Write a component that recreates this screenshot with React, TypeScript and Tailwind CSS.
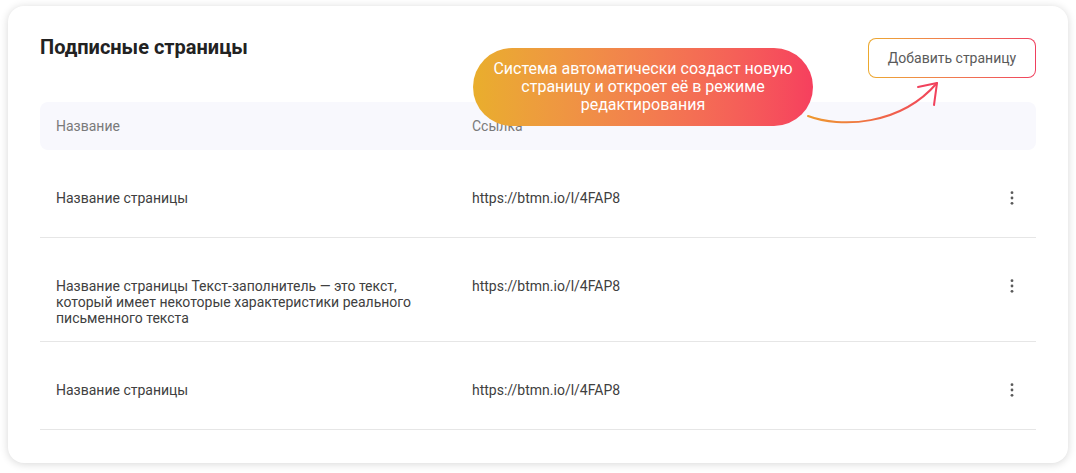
const rows = [
  { name: "Название страницы", link: "https://btmn.io/l/4FAP8", h: "h-[88px]" },
  {
    name: "Название страницы Текст-заполнитель — это текст, который имеет некоторые характеристики реального письменного текста",
    link: "https://btmn.io/l/4FAP8",
    h: "h-[104px]",
  },
  { name: "Название страницы", link: "https://btmn.io/l/4FAP8", h: "h-[88px]" },
];

const Kebab = () => (
  <svg width="24" height="24" viewBox="0 0 24 24" className="-mt-1">
    <circle cx="12" cy="6.7" r="1.4" fill="#5a5a5a" />
    <circle cx="12" cy="12" r="1.4" fill="#5a5a5a" />
    <circle cx="12" cy="17.3" r="1.4" fill="#5a5a5a" />
  </svg>
);

const Arrow = () => (
  <svg width="150" height="60" viewBox="0 0 150 60" className="absolute left-[792px] top-[64px]">
    <defs>
      <linearGradient id="arr" x1="0" y1="0" x2="1" y2="0">
        <stop offset="0" stopColor="#ee9a2e" />
        <stop offset="1" stopColor="#f1425c" />
      </linearGradient>
    </defs>
    <path d="M8 46 C 40 58, 100 56, 137 13" fill="none" stroke="url(#arr)" strokeWidth="2" strokeLinecap="round" />
    <path d="M118 17 L137 13 L134 35" fill="none" stroke="#f1425c" strokeWidth="2" strokeLinecap="round" strokeLinejoin="round" />
  </svg>
);

export default function App() {
  return (
    <div className="w-[1076px] h-[473px] bg-white pt-[6px] pl-[8px] font-['Roboto',sans-serif]">
      <div className="relative w-[1060px] h-[457px] rounded-[16px] bg-white shadow-[0_1px_8px_rgba(0,0,0,0.16)] px-8 pt-[27px]">
        <div className="flex justify-between items-start h-[69px]">
          <h1 className="text-[20px] leading-[28px] font-bold text-[#222]">Подписные страницы</h1>
          <div className="mt-[5px] rounded-[8px] p-px bg-gradient-to-r from-[#eca92e] to-[#ef3f5e]">
            <button className="h-[38px] w-[166px] rounded-[7px] bg-white text-[14px] text-[#5a5a5a]">
              Добавить страницу
            </button>
          </div>
        </div>

        <div className="flex items-center h-12 rounded-[8px] bg-[#f8f8fd] text-[14px] text-[#7a7a7a]">
          <div className="w-[416px] px-4">Название</div>
          <div className="px-4">Ссылка</div>
        </div>

        {rows.map((r, i) => (
          <div key={i} className={`flex items-start pt-10 border-b border-[#e6e6e6] ${r.h} text-[14px] leading-4 text-[#404040]`}>
            <div className="w-[416px] pl-4 pr-10">{r.name}</div>
            <div className="flex-1 px-4">{r.link}</div>
            <div className="pr-3">
              <Kebab />
            </div>
          </div>
        ))}

        <div className="absolute left-[465px] top-[42px] w-[340px] h-[78px] rounded-full bg-gradient-to-r from-[#e9ae2c] to-[#f63f5e] flex items-center justify-center text-center text-white text-[16px] leading-[18px]">
          <span>
            Система автоматически создаст новую
            <br />
            страницу и откроет её в режиме
            <br />
            редактирования
          </span>
        </div>
        <Arrow />
      </div>
    </div>
  );
}
